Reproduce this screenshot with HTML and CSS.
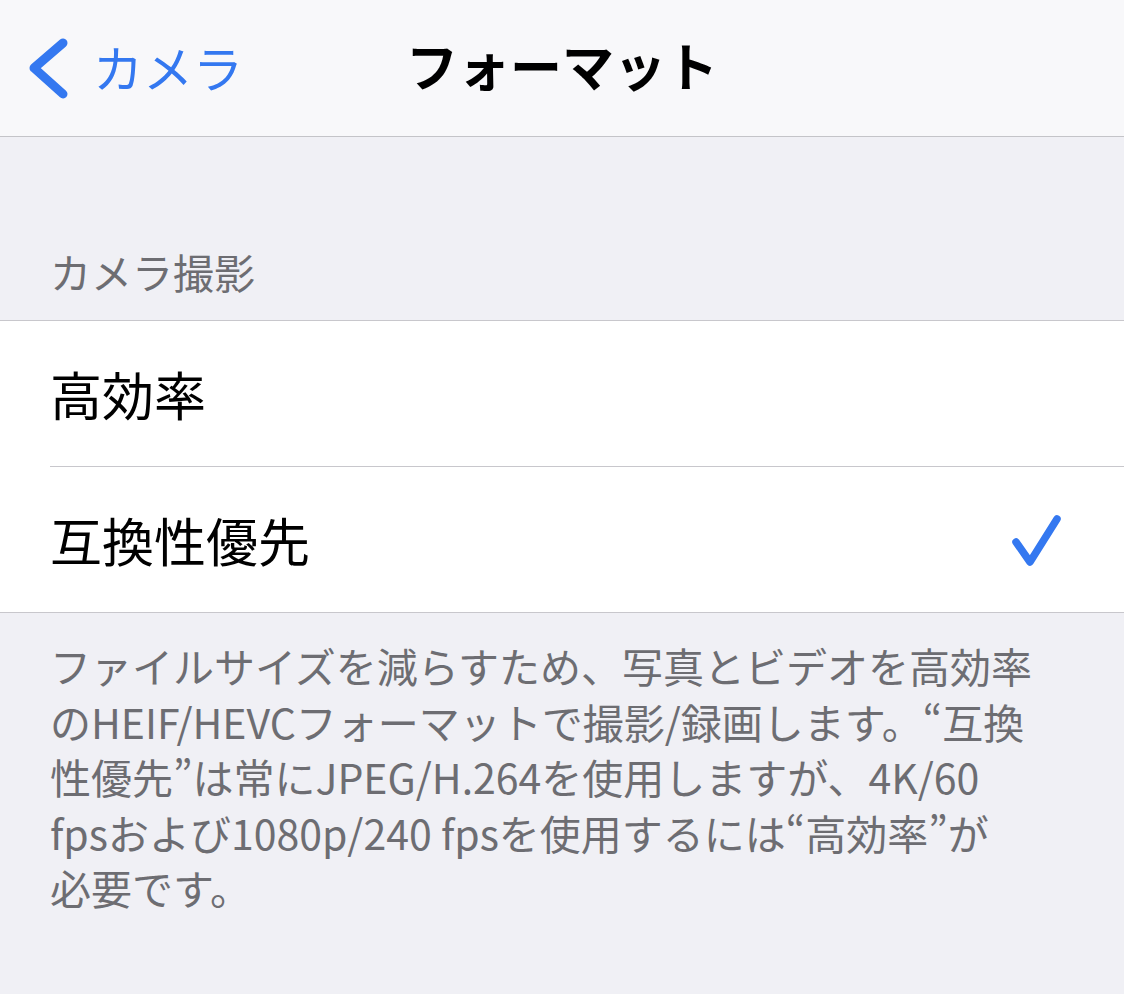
FILE: index.html
```html
<!DOCTYPE html>
<html lang="ja">
<head>
<meta charset="utf-8">
<link rel="stylesheet" href="styles.css">
</head>
<body>
<header class="nav">
  <div class="nav-left">
    <svg class="chev" width="44" height="66" viewBox="0 0 44 66"><path d="M37 8 L8 33 L37 59" fill="none" stroke="#3478f0" stroke-width="9" stroke-linecap="round" stroke-linejoin="round"/></svg>
    <span class="back-text">カメラ</span>
  </div>
  <div class="nav-title">フォーマット</div>
  <div></div>
</header>
<div class="section-head"><span>カメラ撮影</span></div>
<div class="group">
  <div class="row"><span class="row-text">高効率</span></div>
  <div class="row last"><span class="row-text">互換性優先</span>
    <svg class="check" width="60" height="60" viewBox="0 0 60 60"><path d="M10 32 L24 52 L51 9" fill="none" stroke="#3478f0" stroke-width="7.5" stroke-linecap="round" stroke-linejoin="round"/></svg>
  </div>
</div>
<div class="footer">ファイルサイズを減らすため、写真とビデオを高効率<br>のHEIF/HEVCフォーマットで撮影/録画します。“互換<br>性優先”は常にJPEG/H.264を使用しますが、4K/60<br>fpsおよび1080p/240 fpsを使用するには“高効率”が<br>必要です。</div>
</body>
</html>
```
FILE: styles.css
```css
html, body {
  margin: 0;
  padding: 0;
}
body {
  width: 1124px;
  height: 994px;
  background: #f0f0f5;
  font-family: "Noto Sans CJK JP", "Noto Sans", sans-serif;
  overflow: hidden;
}
.nav {
  height: 136px;
  background: #f8f8fa;
  border-bottom: 1px solid #c4c4c8;
  display: grid;
  grid-template-columns: 1fr auto 1fr;
  align-items: center;
}
.nav-left {
  display: flex;
  align-items: center;
  padding-left: 26px;
}
.chev {
  display: block;
}
.back-text {
  color: #3478f0;
  font-size: 50px;
  margin-left: 23px;
  line-height: 1;
  padding-bottom: 4px;
}
.nav-title {
  font-size: 52px;
  font-weight: 700;
  color: #000;
  line-height: 1;
  padding-bottom: 6px;
}
.section-head {
  height: 183px;
  display: flex;
  align-items: flex-end;
  padding-left: 50px;
  border-bottom: 1px solid #c8c7cc;
}
.section-head span {
  font-size: 41px;
  line-height: 50px;
  color: #6d6d72;
  padding-bottom: 24px;
}
.group {
  background: #fff;
  padding-left: 50px;
  border-bottom: 1px solid #c8c7cc;
}
.row {
  height: 145px;
  display: flex;
  align-items: center;
  justify-content: space-between;
  border-bottom: 1px solid #c8c7cc;
  padding-right: 58px;
}
.row.last {
  border-bottom: none;
}
.row-text {
  font-size: 52px;
  color: #000;
  line-height: 1;
}
.footer {
  padding: 25px 0 0 50px;
  font-size: 41px;
  line-height: 55.5px;
  color: #6d6d72;
  white-space: nowrap;
}
```
